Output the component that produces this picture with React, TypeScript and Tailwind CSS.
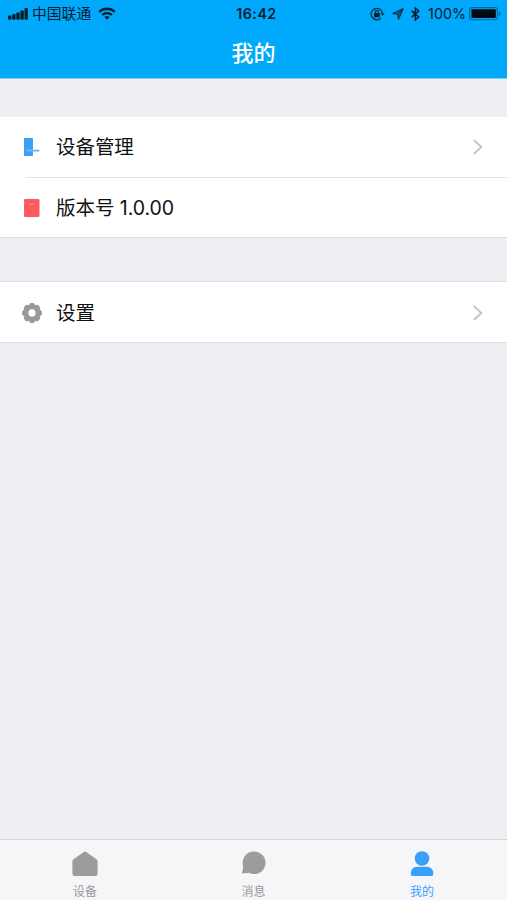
import React from 'react';

const SignalIcon = () => (
  <svg className="w-5 h-3" viewBox="0 0 20 12" fill="#04202f">
    <rect x="0" y="7.5" width="3.4" height="4.3" rx="1" />
    <rect x="4.2" y="6" width="3.4" height="5.8" rx="1" />
    <rect x="8.3" y="4.5" width="3.4" height="7.3" rx="1" />
    <rect x="12.4" y="2.4" width="3.4" height="9.4" rx="1" />
    <rect x="16.5" y="0" width="3.4" height="11.8" rx="1" />
  </svg>
);

const WifiIcon = () => (
  <svg className="w-[18px] h-[13px]" viewBox="0 0 18 13" fill="none" stroke="#04202f" strokeWidth="2.3">
    <path d="M1.2 4.9a11.2 11.2 0 0 1 15.6 0" />
    <path d="M4.2 8a7 7 0 0 1 9.6 0" />
    <path d="M6.4 10.1a3.8 3.8 0 0 1 5.2 0L9 12.8z" fill="#04202f" stroke="none" />
  </svg>
);

const LockIcon = () => (
  <svg className="w-[15px] h-[14px]" viewBox="0 0 15 14" fill="none" stroke="#063a58" strokeWidth="1.4">
    <path d="M12.5 6.2A5.7 5.7 0 1 0 11 11" />
    <path d="M10.3 6h4.5l-2.2 3z" fill="#063a58" stroke="none" />
    <rect x="4" y="5.9" width="5.8" height="4.3" rx=".5" fill="#04202f" stroke="none" />
    <path d="M5.3 6.3V5.1a1.6 1.6 0 0 1 3.2 0v1.2" />
  </svg>
);

const LocationIcon = () => (
  <svg className="w-3 h-3" viewBox="0 0 12 12" fill="none" stroke="#063a58" strokeWidth="1.5" strokeLinejoin="round">
    <path d="M11 1 1.2 5.5l5 .4.3 5z" />
    <path d="M11 1 6.2 5.9" />
  </svg>
);

const BluetoothIcon = () => (
  <svg className="w-[9px] h-[14px]" viewBox="0 0 9 14" fill="none" stroke="#04202f" strokeWidth="1.5">
    <path d="m.7 3.9 7 6.1-3.4 2.9V1.1L7.7 4l-7 6.1" />
  </svg>
);

const BatteryIcon = () => (
  <svg className="w-8 h-[14px]" viewBox="0 0 32 14">
    <rect x=".6" y=".6" width="27.8" height="12.2" rx="2.5" fill="none" stroke="#056697" strokeWidth="1.1" />
    <rect x="2.4" y="2.3" width="24.4" height="8.8" rx="1" fill="#000a10" />
    <path d="M29.8 4.4c2.3.5 2.3 4 0 4.6z" fill="#056697" />
  </svg>
);

const DeviceIcon = () => (
  <svg className="w-4 h-[18px]" viewBox="0 0 16 18">
    <rect width="9" height="18" rx="1" fill="#3d9ff8" />
    <path d="M2.5 11.5H9v2H2.5z" fill="#78bdfb" />
    <path d="M9 11.7h6.5v1.8H9z" fill="#69b5fa" />
  </svg>
);

const VersionIcon = () => (
  <svg className="w-4 h-[18px]" viewBox="0 0 16 18">
    <rect width="15.5" height="18" rx="1.3" fill="#fb5b60" />
    <path d="M4.5 5.8 10.5 4.4" fill="none" stroke="#fd8589" strokeWidth="1.2" />
    <path d="M0 3.8h1M0 13.8h1" stroke="#fd9194" />
  </svg>
);

const TEETH = [0, 45, 90, 135, 180, 225, 270, 315];

const GearIcon = () => (
  <svg className="w-5 h-5 -ml-0.5" viewBox="0 0 20 20">
    <g fill="#999">
      {TEETH.map((angle) => (
        <rect key={angle} x="7.1" y=".1" width="5.8" height="6" rx="2" transform={`rotate(${angle} 10 10)`} />
      ))}
    </g>
    <circle cx="10" cy="10" r="6.1" fill="none" stroke="#999" strokeWidth="4.8" />
  </svg>
);

const ChevronIcon = () => (
  <svg className="w-2.5 h-4 mb-px" viewBox="0 0 10 16" fill="none" stroke="#c4c4c7" strokeWidth="1.9">
    <path d="M.8 1 8.3 8 .8 15" />
  </svg>
);

const HomeIcon = () => (
  <svg className="w-[26px] h-[26px]" viewBox="0 0 26 26" fill="#9c9c9c">
    <path d="M11.8 1.1Q13 .1 14.2 1.1L24.5 8.2Q25.6 9 25.6 10.3V22.7Q25.6 25 23.3 25H2.7Q.4 25 .4 22.7V10.3Q.4 9 1.5 8.2z" />
  </svg>
);

const MessageIcon = () => (
  <svg className="w-[26px] h-[26px]" viewBox="0 0 26 26" fill="#9c9c9c">
    <path d="M13.2.5a11.3 11.3 0 1 1-5.4 21.2C5.6 22.4 3 22.5.6 22.2c1.1-1.7 1.5-4 1.5-7.1A11.3 11.3 0 0 1 13.2.5z" />
  </svg>
);

const UserIcon = () => (
  <svg className="w-[26px] h-[26px]" viewBox="0 0 26 26" fill="#38a0f8">
    <circle cx="13" cy="7.5" r="7.3" />
    <path d="M8 15.7h10c3.8 0 6.3 3 6.3 6.8 0 1.8-.8 2.6-2.2 2.6H4c-1.4 0-2.2-.8-2.2-2.6 0-3.8 2.4-6.8 6.2-6.8z" />
  </svg>
);

interface RowProps {
  icon: React.ReactNode;
  label: string;
  arrow?: boolean;
}

const Row: React.FC<RowProps> = ({ icon, label, arrow }) => (
  <div className="h-[60px] flex items-center pl-6 pr-6">
    <div className="w-8 shrink-0">{icon}</div>
    <span className="flex-1 pt-0.5 text-[19.5px] leading-none tracking-[-0.05px] text-[#111]">{label}</span>
    {arrow && <ChevronIcon />}
  </div>
);

const TABS = [
  { label: '设备', icon: <HomeIcon />, active: false },
  { label: '消息', icon: <MessageIcon />, active: false },
  { label: '我的', icon: <UserIcon />, active: true },
];

const App: React.FC = () => {
  return (
    <div className="w-full h-[900px] flex flex-col overflow-hidden bg-[#eeeef3] font-['Inter','Noto_Sans_CJK_SC',sans-serif]">
      <header className="h-[79px] shrink-0 bg-[#00a9fb] border-b border-[#7fd2f8]">
        <div className="h-7 grid grid-cols-[1fr_auto_1fr] items-center pl-2 pr-1.5 text-[#04202f]">
          <div className="flex items-center">
            <SignalIcon />
            <span className="ml-1 mr-[7px] pt-px text-[14.8px] leading-none">中国联通</span>
            <WifiIcon />
          </div>
          <span className="pl-1 text-[14.2px] leading-none font-semibold tracking-[0.5px]">16:42</span>
          <div className="flex items-center justify-end">
            <LockIcon />
            <span className="ml-[7px] mr-[7px]"><LocationIcon /></span>
            <BluetoothIcon />
            <span className="ml-2 mr-[3px] text-[14.3px] leading-none">100%</span>
            <BatteryIcon />
          </div>
        </div>
        <h1 className="h-[50px] flex items-center justify-center text-[22px] leading-none font-medium text-white">我的</h1>
      </header>

      <main className="flex-1 pt-[38px]">
        <section className="bg-white">
          <Row icon={<DeviceIcon />} label="设备管理" arrow />
          <div className="ml-[26px] h-px bg-[#e4e4e6]" />
          <Row icon={<VersionIcon />} label="版本号 1.0.00" />
        </section>
        <section className="-mt-px border-t border-[#dedee1] pt-[43px]">
          <div className="pt-px -mb-px bg-white border-t border-[#dedee1]">
            <Row icon={<GearIcon />} label="设置" arrow />
          </div>
          <div className="h-px bg-[#dedee1]" />
        </section>
      </main>

      <nav className="h-[61px] shrink-0 grid grid-cols-[170px_167px_170px] bg-[#f6f6f9] border-t border-[#d3d3d7]">
        {TABS.map((tab) => (
          <div key={tab.label} className="flex flex-col items-center pt-[11px]">
            {tab.icon}
            <span className={tab.active ? 'mt-[9px] text-xs leading-none text-[#38a0f8]' : 'mt-[9px] text-xs leading-none text-[#999]'}>
              {tab.label}
            </span>
          </div>
        ))}
      </nav>
    </div>
  );
};

export default App;
